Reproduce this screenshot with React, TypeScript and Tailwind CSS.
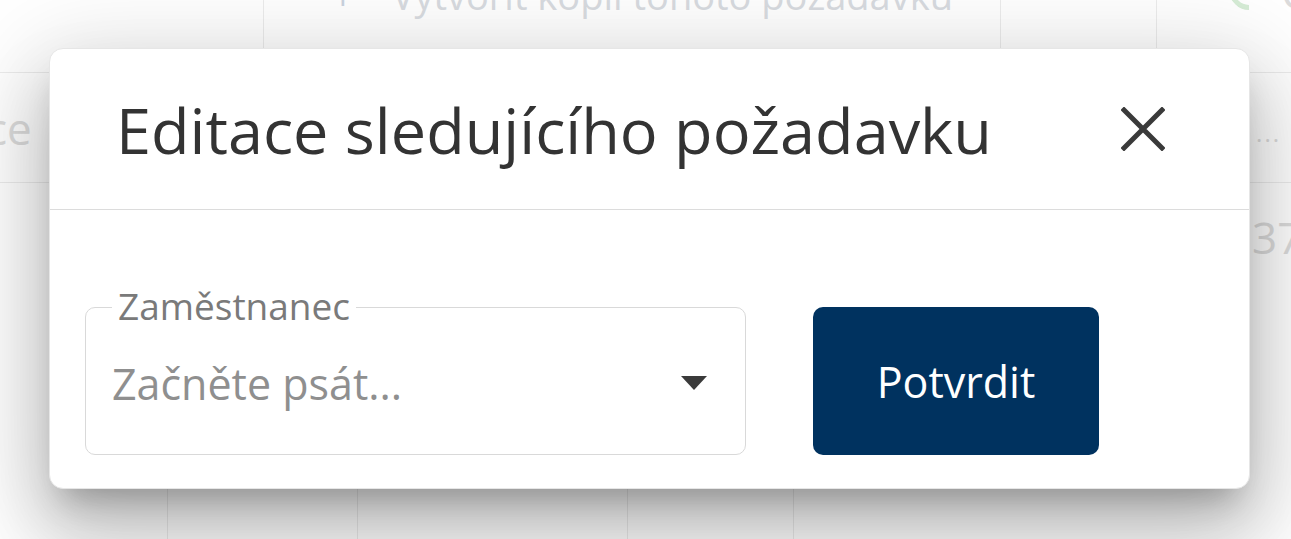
import React from 'react';

const font = { fontFamily: '"Open Sans", "Noto Sans", sans-serif' };

function CloseIcon() {
  return (
    <svg width="44" height="44" viewBox="0 0 44 44" className="text-[#3a3a3a]">
      <path d="M3 3L41 41M41 3L3 41" stroke="currentColor" strokeWidth="5" strokeLinecap="square" />
    </svg>
  );
}

// faded table that sits behind the dialog
function Backdrop() {
  return (
    <div className="flex flex-col w-full h-[539px] overflow-hidden bg-white text-[#dcdcdc] text-[44px]">
      <div className="flex h-[73px] border-b border-[#ececec] shrink-0">
        <div className="w-[263px] shrink-0" />
        <div className="w-[737px] shrink-0 border-l border-[#ececec] flex items-end pb-[58px] pl-[68px] gap-[38px] text-[#d8dbe0] text-[38px]">
          <span className="text-[#cad4df] leading-none">+</span>
          <span className="leading-none whitespace-nowrap">Vytvořit kopii tohoto požadavku</span>
        </div>
        <div className="w-[156px] shrink-0 border-l border-[#ececec]" />
        <div className="flex-1 border-l border-[#ececec] flex items-start pl-[72px] -mt-[30px] gap-3">
          <div className="w-[40px] h-[40px] rounded-full border-[5px] border-[#d6ecd6] border-t-transparent border-r-transparent border-l-transparent rotate-45" />
          <span className="leading-none">C</span>
        </div>
      </div>
      <div className="flex h-[110px] border-b border-[#ececec] shrink-0 items-center">
        <span className="-ml-[14px] leading-none">ce</span>
        <div className="flex-1" />
        <span className="pr-[10px] leading-none tracking-[2px] text-[24px] pt-[10px]">...</span>
      </div>
      <div className="flex h-[120px] shrink-0 items-start pt-[32px]">
        <div className="flex-1" />
        <span className="w-[39px] leading-none overflow-hidden whitespace-nowrap">37</span>
      </div>
      <div className="flex flex-1 pt-[130px]">
        <div className="w-[167px] shrink-0" />
        <div className="w-[190px] shrink-0 border-l border-[#ececec]" />
        <div className="w-[270px] shrink-0 border-l border-[#ececec]" />
        <div className="w-[166px] shrink-0 border-l border-[#ececec]" />
        <div className="flex-1 border-l border-[#ececec]" />
      </div>
    </div>
  );
}

export default function App() {
  return (
    <div className="relative w-[1291px] h-[539px] overflow-hidden bg-white" style={font}>
      <Backdrop />

      {/* ── Dialog ─────────────────────────────────────────── */}
      <div className="absolute left-[49px] top-[48px] w-[1201px] bg-white rounded-[14px] border border-[#e6e6e6] shadow-[0_22px_30px_-14px_rgba(0,0,0,0.25),0_48px_76px_6px_rgba(0,0,0,0.16),0_18px_92px_16px_rgba(0,0,0,0.14)]">
        <div className="flex items-center justify-between h-[161px] pl-[66px] pr-[84px] border-b border-[#dcdcdc]">
          <h1 className="text-[63px] text-[#333333] leading-none whitespace-nowrap">Editace sledujícího požadavku</h1>
          <button className="flex items-center justify-center">
            <CloseIcon />
          </button>
        </div>

        <div className="flex items-start gap-[67px] pl-[35px] pt-[97px] pb-[33px]">
          {/* outlined autocomplete field */}
          <div className="relative w-[661px] h-[148px] rounded-[10px] border border-[#d9d9d9] flex items-center justify-between pl-[26px] pr-[38px] pt-[4px]">
            <span className="absolute left-[26px] -top-[24px] bg-white px-[6px] text-[37px] leading-[44px] text-[#7a7a7a]">
              Zaměstnanec
            </span>
            <span className="text-[43px] text-[#8f8f8f] leading-none">Začněte psát...</span>
            <svg width="26" height="14" viewBox="0 0 26 14">
              <path d="M0 0H26L13 14Z" fill="#3a3a3a" />
            </svg>
          </div>

          <button className="w-[286px] h-[148px] rounded-[10px] bg-[#00325f] text-white text-[43px] leading-none">
            Potvrdit
          </button>
        </div>
      </div>
    </div>
  );
}
